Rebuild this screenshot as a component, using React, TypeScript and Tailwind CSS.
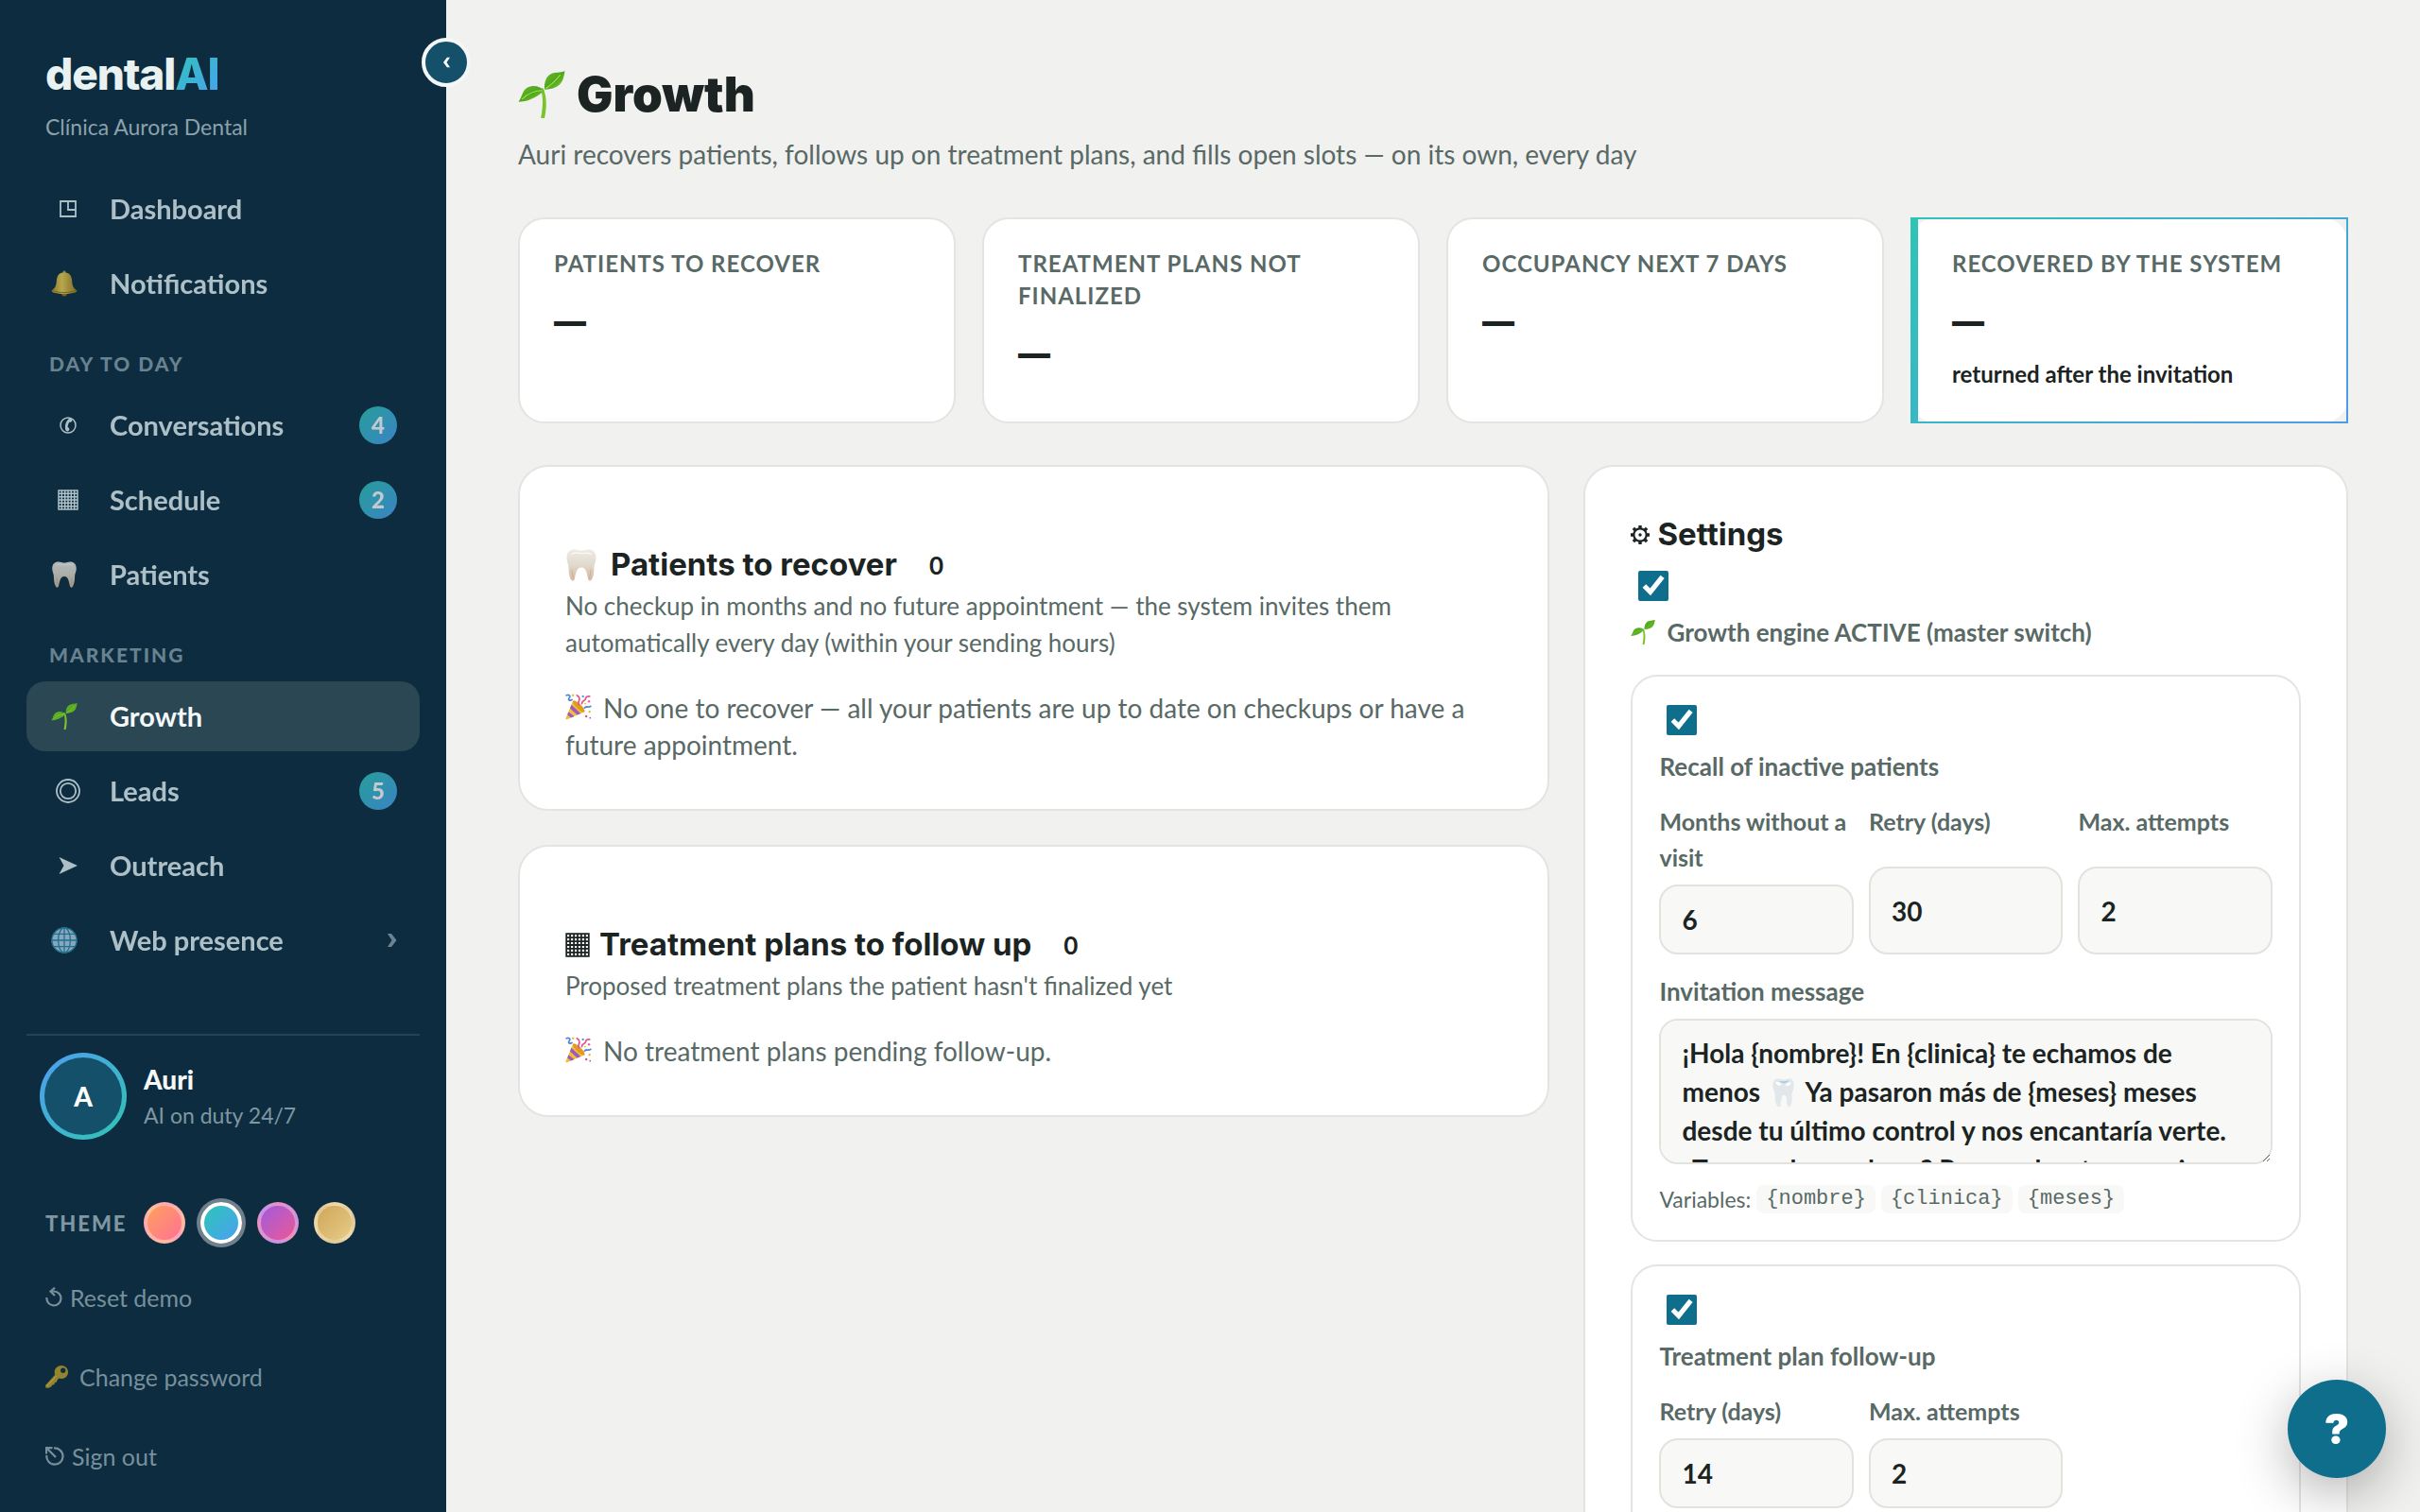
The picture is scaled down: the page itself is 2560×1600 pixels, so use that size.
import React from 'react';
import { clsx } from 'clsx';

type IconProps = { className?: string };

/* ---------- Emoji style icons ---------- */

function SeedlingIcon({ className }: IconProps) {
  return (
    <svg viewBox="0 0 48 48" className={className} aria-hidden="true">
      <defs>
        <linearGradient id="leaf" x1="0" y1="0" x2="1" y2="1">
          <stop offset="0" stopColor="#6cc02a" />
          <stop offset="0.5" stopColor="#4fa51c" />
          <stop offset="1" stopColor="#8ad235" />
        </linearGradient>
      </defs>
      <path d="M25 17c4 7 4.600 18 2 30.500-.6 1.600-3.600 1.600-3.700-.2C25.600 35 25.500 25 23 19z" fill="#79c32c" />
      <path d="M27 19c-1-8 2.500-16 10-17 4-.5 7-.8 10.500-1.800C46 9 45 18 27 19z" fill="url(#leaf)" />
      <path d="M26.500 20C20 12.500 8 14.500 5 22c-1.600 4-2.500 6-4.500 9.500C9 31.500 18 28 26.500 20z" fill="url(#leaf)" />
      <path d="M28 18C33 15 38 10 43 4M25 20C17 20 10 23 4 29" stroke="#a4de55" strokeWidth="1" fill="none" />
    </svg>
  );
}

function BellIcon({ className }: IconProps) {
  return (
    <svg viewBox="0 0 48 48" className={className} aria-hidden="true">
      <defs>
        <linearGradient id="bell" x1="0" y1="0" x2="1" y2="0">
          <stop offset="0" stopColor="#b98f1c" />
          <stop offset="0.4" stopColor="#efd255" />
          <stop offset="1" stopColor="#a67f18" />
        </linearGradient>
      </defs>
      <circle cx="24" cy="3.500" r="2.500" fill="#b5a36a" />
      <circle cx="24" cy="42" r="5" fill="#a8681c" />
      <path d="M24 4c10 0 13.500 7 14 15 .5 9 2 13 9 18 1 3-9 6-23 6S0 40 1 37c7-5 8.500-9 9-18C10.500 11 14 4 24 4z" fill="url(#bell)" />
      <path d="M4 37c8 4.500 32 4.500 40 0" stroke="#8f6d12" strokeWidth="1.500" fill="none" />
    </svg>
  );
}

function ToothIcon({ className }: IconProps) {
  return (
    <svg viewBox="0 0 48 48" className={className} aria-hidden="true">
      <defs>
        <linearGradient id="tooth" x1="0" y1="0" x2="0" y2="1">
          <stop offset="0" stopColor="#efebe3" />
          <stop offset="0.5" stopColor="#e0d9cc" />
          <stop offset="1" stopColor="#d3b99f" />
        </linearGradient>
      </defs>
      <path
        d="M12 .8c5-.6 8 1.700 12 1.700S31 .2 36 .8c8 1 11 8 9.500 16-.8 4.500-2.500 6-2.500 12 0 7-1.500 14-4 17.500-1.600 2-4 1.200-4.700-1.300C32.500 39 32 27.500 24 27.500S15.500 39 13.700 45c-.7 2.500-3.100 3.300-4.700 1.300C6.500 43 5 36 5 28.800c0-6-1.700-7.500-2.500-12C1 8.800 4 1.800 12 .8z"
        fill="url(#tooth)"
      />
      <path d="M9 8c4-4 9-2 15-1.500S35 4 39 8" stroke="#fff" strokeWidth="2" fill="none" opacity="0.7" />
      <path d="M10 30c0 6 1 10 2 13M38 30c0 6-1 10-2 13" stroke="#c4a78b" strokeWidth="1.500" fill="none" opacity="0.6" />
    </svg>
  );
}

function GlobeIcon({ className }: IconProps) {
  return (
    <svg viewBox="0 0 48 48" className={className} aria-hidden="true">
      <circle cx="24" cy="24" r="23" fill="#b4cfe8" />
      <g fill="none" stroke="#2487a6" strokeWidth="2.200">
        <circle cx="24" cy="24" r="22.500" />
        <ellipse cx="24" cy="24" rx="11" ry="22.500" />
        <path d="M24 1.500v45M1.500 24h45M5 12.500h38M5 35.500h38" />
      </g>
    </svg>
  );
}

function PartyIcon({ className }: IconProps) {
  return (
    <svg viewBox="0 0 48 48" className={className} aria-hidden="true">
      <path d="M14 13L35 33 3 46.500c-2 .8-2.800-.4-2-2z" fill="#f4bd35" />
      <path d="M11 20l17 16-6.500 2.700L8.500 26.500zM5.800 33l10.500 8-6 2.600-6.500-5.600z" fill="#9a5bc4" />
      <ellipse cx="24.500" cy="23" rx="4.500" ry="14.500" transform="rotate(-46 24.500 23)" fill="#e09b23" />
      <path d="M2 3c5-2 8 1 5 5s2 5 5 3M35 26c3-5 6 1 11-3" stroke="#4e86d8" strokeWidth="3" fill="none" strokeLinecap="round" />
      <path d="M25 20c-4-6 3-7 0-13-1-2-3-3-4-4M30 18c0-6 6-4 7-9 .5-3 3-5 7-4" stroke="#e2568c" strokeWidth="3" fill="none" strokeLinecap="round" />
      <g>
        <circle cx="14" cy="3" r="2" fill="#efb32f" />
        <circle cx="32" cy="5" r="2" fill="#5a93e0" />
        <circle cx="43" cy="14" r="2.200" fill="#ea6a9b" />
        <circle cx="44" cy="33" r="2" fill="#efb32f" />
        <circle cx="38" cy="41" r="2.200" fill="#e2568c" />
        <circle cx="45" cy="44" r="1.500" fill="#9a5bc4" />
        <circle cx="36" cy="18" r="1.500" fill="#efb32f" />
      </g>
    </svg>
  );
}

function KeyIcon({ className }: IconProps) {
  return (
    <svg viewBox="0 0 48 48" className={className} aria-hidden="true">
      <path
        fillRule="evenodd"
        d="M34 0c8 0 14 6 14 14s-6 14-14 14c-2 0-4-.4-5.500-1L25 31l-1 4-4 1-1 4-4 1-3 4-5 2.500H1L0 42l20-22c-.4-2-.6-4-.6-6C19.400 6 26 0 34 0zm3.500 5a5 5 0 100 10.500 5 5 0 000-10.500z"
        fill="#b59a2a"
      />
      <path d="M3 44L23 22" stroke="#d9c257" strokeWidth="2" />
    </svg>
  );
}

/* ---------- Line glyphs ---------- */

function DashboardIcon({ className }: IconProps) {
  return (
    <svg viewBox="0 0 18 18" className={className} fill="none" stroke="currentColor" strokeWidth="1.800" aria-hidden="true">
      <path d="M1 1h16v16H1zM9 1v9h8" />
    </svg>
  );
}

function PhoneIcon({ className }: IconProps) {
  return (
    <svg viewBox="0 0 18 18" className={className} aria-hidden="true">
      <circle cx="9" cy="9" r="8" fill="none" stroke="currentColor" strokeWidth="1.500" />
      <path d="M10.500 1.500l2.600.6.300 2.400-2 1.500-.9-.4c-1.200 1.700-1.800 3.600-1.900 5.600l1.300.6.600 2-1.600 1.800-2-.6C5 11 6 5 10.500 1.500z" fill="currentColor" />
    </svg>
  );
}

function GridIcon({ className }: IconProps) {
  return (
    <svg viewBox="0 0 22 22" className={className} stroke="currentColor" strokeWidth="1.500" fill="none" aria-hidden="true">
      <path d="M1 1h20v20H1zM4.300 1v20M7.700 1v20M11 1v20M14.300 1v20M17.700 1v20M1 4.300h20M1 7.700h20M1 11h20M1 14.300h20M1 17.700h20" />
    </svg>
  );
}

function TargetIcon({ className }: IconProps) {
  return (
    <svg viewBox="0 0 26 26" className={className} fill="none" stroke="currentColor" strokeWidth="1.800" aria-hidden="true">
      <circle cx="13" cy="13" r="12" />
      <circle cx="13" cy="13" r="8.200" />
    </svg>
  );
}

function ArrowheadIcon({ className }: IconProps) {
  return (
    <svg viewBox="0 0 20 18" className={className} fill="currentColor" aria-hidden="true">
      <path d="M.5 0L20 9 .5 18 5.500 9z" />
    </svg>
  );
}

function ChevronIcon({ className }: IconProps) {
  return (
    <svg viewBox="0 0 10 14" className={className} fill="currentColor" aria-hidden="true">
      <path d="M0 0h4l5.500 7L4 14H0l4.500-7z" />
    </svg>
  );
}

function GearIcon({ className }: IconProps) {
  return (
    <svg viewBox="0 0 20 20" className={className} fill="none" stroke="currentColor" aria-hidden="true">
      <circle cx="10" cy="10" r="6.700" strokeWidth="2.200" />
      <circle cx="10" cy="10" r="1.700" fill="currentColor" stroke="none" />
      <path
        d="M10 0v3M10 17v3M0 10h3M17 10h3M2.900 2.900L5 5M15 15l2.100 2.100M2.900 17.100L5 15M15 5l2.100-2.100"
        strokeWidth="3.400"
      />
    </svg>
  );
}

function ResetIcon({ className }: IconProps) {
  return (
    <svg viewBox="0 0 18 22" className={className} fill="none" stroke="currentColor" strokeWidth="2.200" aria-hidden="true">
      <path d="M1.500 11a7.500 7.500 0 107.500-6.500H6" />
      <path d="M10 .7L5.500 4.500 10 9" />
    </svg>
  );
}

function SignOutIcon({ className }: IconProps) {
  return (
    <svg viewBox="0 0 20 20" className={className} fill="none" stroke="currentColor" strokeWidth="2.200" aria-hidden="true">
      <path d="M9 1.500A8.600 8.600 0 111.400 9" />
      <path d="M11 11L2 2M1 7.500V1.200h6.500" />
    </svg>
  );
}

/* ---------- Sidebar ---------- */

type NavEntry = {
  label: string;
  icon: React.ReactNode;
  emoji?: boolean;
  badge?: number;
  active?: boolean;
  expandable?: boolean;
};

const mainNav: NavEntry[] = [
  { label: 'Dashboard', icon: <DashboardIcon className="size-[18px]" /> },
  { label: 'Notifications', icon: <BellIcon className="size-7" />, emoji: true },
];

const dayNav: NavEntry[] = [
  { label: 'Conversations', icon: <PhoneIcon className="size-[18px]" />, badge: 4 },
  { label: 'Schedule', icon: <GridIcon className="size-[22px]" />, badge: 2 },
  { label: 'Patients', icon: <ToothIcon className="size-7" />, emoji: true },
];

const marketingNav: NavEntry[] = [
  { label: 'Growth', icon: <SeedlingIcon className="size-7" />, emoji: true, active: true },
  { label: 'Leads', icon: <TargetIcon className="size-[26px]" />, badge: 5 },
  { label: 'Outreach', icon: <ArrowheadIcon className="h-[18px] w-5" /> },
  { label: 'Web presence', icon: <GlobeIcon className="size-7" />, emoji: true, expandable: true },
];

function NavItem({ label, icon, emoji, badge, active, expandable }: NavEntry) {
  return (
    <a
      href="#"
      className={clsx(
        'flex h-[74px] items-center rounded-[20px] pr-6 pl-[26px] text-[29px] font-bold',
        active ? 'bg-[#2b4754] text-[#f4f8f8]' : 'text-[#e4f2f5] opacity-75'
      )}
    >
      <span className={clsx('mr-[26px] flex w-9', emoji ? 'justify-start' : 'justify-center')}>{icon}</span>
      <span className="grow">{label}</span>
      {badge && (
        <span className="flex size-10 items-center justify-center rounded-full bg-linear-135 from-[#2ec4b6] to-[#4a9ff0] text-[24px] font-black text-white">
          {badge}
        </span>
      )}
      {expandable && <ChevronIcon className="h-3.5 w-2.5 opacity-60" />}
    </a>
  );
}

function NavGroup({ title, items }: { title?: string; items: NavEntry[] }) {
  return (
    <div>
      {title && <h2 className="px-6 pt-8 pb-3 text-[21px] leading-8 font-black tracking-[2px] text-[#688290]">{title}</h2>}
      <div className="flex flex-col gap-[5px]">
        {items.map(item => (
          <NavItem key={item.label} {...item} />
        ))}
      </div>
    </div>
  );
}

const themes = [
  { name: 'Coral', className: 'from-[#ff9f5a] to-[#ff7091] border-white/35' },
  { name: 'Ocean', className: 'from-[#2ec4b6] to-[#4a9ff0] border-white ring-4 ring-white/40', selected: true },
  { name: 'Orchid', className: 'from-[#a257dc] to-[#ea5596] border-white/35' },
  { name: 'Gold', className: 'from-[#cfa658] to-[#e6cc88] border-white/35' },
];

function Sidebar() {
  return (
    <aside className="relative z-10 flex h-full w-[472px] shrink-0 flex-col bg-[#0d2c3f] px-7 pt-[52px]">
      <button
        type="button"
        aria-label="Collapse menu"
        className="absolute top-10 -right-[26px] flex size-[52px] items-center justify-center rounded-full border-4 border-[#f4f7f7] bg-[#15506b] text-white"
      >
        <svg viewBox="0 0 8 12" className="h-3 w-[7px]" fill="currentColor" aria-hidden="true">
          <path d="M4.500 0H8L4 6l4 6H4.500L0 6z" />
        </svg>
      </button>

      <div className="px-5">
        <div className="font-['Inter'] text-[46px] leading-[52px] font-extrabold tracking-tight text-[#e9f2f0]">
          dental
          <span className="bg-linear-135 from-[#2ec4b6] to-[#4a9ff0] bg-clip-text text-transparent">AI</span>
        </div>
        <p className="mt-3 text-[23px] leading-9 text-[#8ca1ab]">Clínica Aurora Dental</p>
      </div>

      <nav className="mt-8">
        <NavGroup items={mainNav} />
        <NavGroup title="DAY TO DAY" items={dayNav} />
        <NavGroup title="MARKETING" items={marketingNav} />
      </nav>

      <div className="mt-[62px] border-t-2 border-[#264352] pt-[18px]">
        <div className="flex items-center gap-[18px] px-3.5">
          <div className="size-[92px] rounded-full bg-linear-135 from-[#4f9cf0] to-[#2ec4b0] p-[5px]">
            <div className="flex size-full items-center justify-center rounded-full bg-[#15506b] text-[28px] font-black text-white">
              A
            </div>
          </div>
          <div>
            <p className="text-[28px] leading-10 font-black text-[#f4f8f8]">Auri</p>
            <p className="text-[23px] leading-9 text-[#7f97a2]">AI on duty 24/7</p>
          </div>
        </div>

        <div className="mt-[66px] flex items-center px-5">
          <span className="w-[104px] text-[22px] font-black tracking-[2px] text-[#7f97a2]">THEME</span>
          <div className="flex gap-4">
            {themes.map(theme => (
              <button
                key={theme.name}
                type="button"
                aria-label={theme.name}
                aria-pressed={!!theme.selected}
                className={clsx('size-11 rounded-full border-4 bg-linear-135', theme.className)}
              />
            ))}
          </div>
        </div>

        <div className="mt-[39px] flex flex-col items-start gap-12 px-5 text-[25px] leading-9 text-[#77909b]">
          <button type="button" className="flex items-center gap-2">
            <ResetIcon className="h-[22px] w-[18px]" />
            Reset demo
          </button>
          <button type="button" className="flex items-center gap-3">
            <KeyIcon className="size-6 opacity-80" />
            Change password
          </button>
          <button type="button" className="flex items-center gap-2">
            <SignOutIcon className="size-5" />
            Sign out
          </button>
        </div>
      </div>
    </aside>
  );
}

/* ---------- Content ---------- */

function StatCard({ label, note, highlight }: { label: string; note?: string; highlight?: boolean }) {
  return (
    <div
      className={clsx(
        'rounded-[28px] border-2 bg-white pt-[30px] pr-8 pb-8 pl-9',
        highlight ? 'border-l-8 [border-image:linear-gradient(135deg,#2ec4b6,#4f9be6)_1]' : 'border-[#e4e4e2]'
      )}
    >
      <p className="text-[24px] leading-[34px] font-bold tracking-[1px] text-[#586966]">{label}</p>
      <p className="mt-[18px] font-['Inter'] text-[34px] leading-[52px] font-black text-[#1c2423]">—</p>
      {note && <p className="mt-3 text-[24px] leading-9 font-bold text-[#1c2423]">{note}</p>}
    </div>
  );
}

type ListPanelProps = { icon: React.ReactNode; title: string; description: string; empty: string };

function ListPanel({ icon, title, description, empty }: ListPanelProps) {
  return (
    <section className="rounded-[32px] border-2 border-[#e4e4e2] bg-white p-12 text-[#586966]">
      <div className="mt-8 flex h-12 items-center">
        {icon}
        <h2 className="font-['Inter'] text-[33px] font-bold text-[#1c2423]">{title}</h2>
        <span className="ml-[34px] text-[26px] font-bold text-[#1c2423]">0</span>
      </div>
      <p className="text-[26px] leading-[39px]">{description}</p>
      <p className="mt-[30px] text-[28px] leading-[39px]">
        <PartyIcon className="mr-3 inline size-7 align-[-2px]" />
        {empty}
      </p>
    </section>
  );
}

const labelClass = 'leading-[38px] font-bold text-[#586966]';
const fieldClass = 'w-full rounded-[20px] border-2 border-[#e2e2df] bg-[#f8f8f6] px-[22px] text-[28px] font-bold text-[#1c2423]';

function Toggle({ id, children }: { id: string; children: React.ReactNode }) {
  return (
    <div>
      <input id={id} type="checkbox" defaultChecked className="ml-2 block size-8 accent-[#0f6e8c]" />
      <label htmlFor={id} className={clsx('flex items-center pt-3.5 pb-0.5 text-[26px]', labelClass)}>
        {children}
      </label>
    </div>
  );
}

function NumberField({ label, value }: { label: string; value: string }) {
  return (
    <label className={clsx('grid gap-2.5 text-[25px]', labelClass)}>
      {label}
      <input type="text" inputMode="numeric" defaultValue={value} className={clsx('min-h-[74px]', fieldClass)} />
    </label>
  );
}

const message =
  '¡Hola {nombre}! En {clinica} te echamos de menos 🦷 Ya pasaron más de {meses} meses desde tu último control y nos encantaría verte. ¿Te agendo una hora? Responde y te organizo una visita.';

function MessageField() {
  return (
    <label className={clsx('mt-5 grid gap-2.5 text-[26px]', labelClass)}>
      Invitation message
      <textarea
        defaultValue={message}
        className={clsx('h-[154px] resize-y py-3.5 leading-[41px] [scrollbar-width:none]', fieldClass)}
      />
    </label>
  );
}

function SettingsPanel() {
  return (
    <section className="rounded-[32px] border-2 border-[#e4e4e2] bg-white p-12">
      <h2 className="flex h-12 items-center gap-2 font-['Inter'] text-[33px] font-bold text-[#1c2423]">
        <GearIcon className="size-5" />
        Settings
      </h2>
      <div className="mt-3.5">
        <Toggle id="engine">
          <SeedlingIcon className="mr-3 size-[26px]" />
          Growth engine ACTIVE (master switch)
        </Toggle>
      </div>

      <div className="mt-6 rounded-[28px] border-2 border-[#e4e4e2] px-7 pt-[30px] pb-7">
        <Toggle id="recall">Recall of inactive patients</Toggle>
        <div className="mt-[18px] grid grid-cols-3 gap-4">
          <NumberField label="Months without a visit" value="6" />
          <NumberField label="Retry (days)" value="30" />
          <NumberField label="Max. attempts" value="2" />
        </div>
        <MessageField />
        <p className="mt-[22px] flex items-center gap-1.5 text-[23px] leading-[30px] text-[#586966]">
          Variables:
          {['{nombre}', '{clinica}', '{meses}'].map(name => (
            <code key={name} className="rounded-lg bg-[#f8f8f6] px-2.5 font-['Liberation_Mono'] text-[22px]">
              {name}
            </code>
          ))}
        </p>
      </div>

      <div className="mt-6 rounded-[28px] border-2 border-[#e4e4e2] px-7 pt-[30px] pb-7">
        <Toggle id="follow-up">Treatment plan follow-up</Toggle>
        <div className="mt-[18px] grid grid-cols-3 gap-4">
          <NumberField label="Retry (days)" value="14" />
          <NumberField label="Max. attempts" value="2" />
        </div>
      </div>
    </section>
  );
}

export default function App() {
  return (
    <div className="flex h-screen overflow-hidden bg-[#f1f1ef] font-['Lato',sans-serif]">
      <Sidebar />

      <main className="grow overflow-y-auto px-[76px] pt-[68px] [scrollbar-width:none]">
        <header>
          <h1 className="flex items-center gap-3 font-['Inter'] text-[51px] leading-[64px] font-black text-[#1c2423]">
            <SeedlingIcon className="size-[50px]" />
            Growth
          </h1>
          <p className="pt-2.5 pb-0.5 text-[28px] leading-[42px] text-[#586966]">
            Auri recovers patients, follows up on treatment plans, and fills open slots — on its own, every day
          </p>
        </header>

        <div className="mt-11 grid grid-cols-4 gap-7">
          <StatCard label="PATIENTS TO RECOVER" />
          <StatCard label="TREATMENT PLANS NOT FINALIZED" />
          <StatCard label="OCCUPANCY NEXT 7 DAYS" />
          <StatCard label="RECOVERED BY THE SYSTEM" note="returned after the invitation" highlight />
        </div>

        <div className="mt-11 grid grid-cols-[1.35fr_1fr] items-start gap-9">
          <div className="flex flex-col gap-9">
            <ListPanel
              icon={<ToothIcon className="mr-3.5 size-[34px]" />}
              title="Patients to recover"
              description="No checkup in months and no future appointment — the system invites them automatically every day (within your sending hours)"
              empty="No one to recover — all your patients are up to date on checkups or have a future appointment."
            />
            <ListPanel
              icon={<GridIcon className="mr-2.5 size-[26px] text-[#1c2423]" />}
              title="Treatment plans to follow up"
              description="Proposed treatment plans the patient hasn't finalized yet"
              empty="No treatment plans pending follow-up."
            />
          </div>
          <SettingsPanel />
        </div>
      </main>

      <button
        type="button"
        aria-label="Help"
        className="fixed right-9 bottom-9 z-20 flex size-[104px] items-center justify-center rounded-full bg-[#0f6e8c] font-['Inter'] text-[44px] font-black text-white shadow-[0_16px_56px_rgba(0,0,0,0.3)]"
      >
        ?
      </button>
    </div>
  );
}
